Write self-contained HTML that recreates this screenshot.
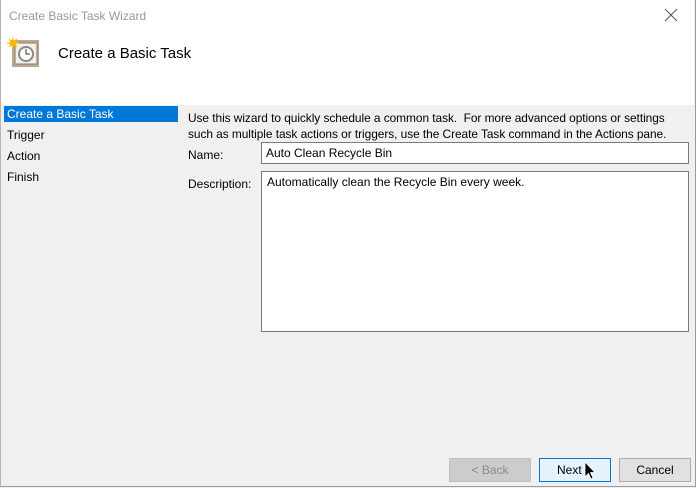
<!DOCTYPE html><html><head><style>
body{margin:0;width:696px;height:488px;overflow:hidden;font-family:"Liberation Sans",sans-serif;font-size:12px;color:#000;position:relative;background:#f0f0f0}
.a{position:absolute;white-space:nowrap}
</style></head><body>
<div class="a" style="left:0;top:0;width:694px;height:105px;background:#fff"></div>
<div class="a" style="left:0;top:0;width:694px;height:486px;border:1px solid #9a9a9a;border-top:none;border-left:1px solid #b5b5b5"></div>
<div class="a" style="left:9px;top:9px;color:#999;font-size:12px">Create Basic Task Wizard</div>
<svg class="a" style="left:664px;top:8px" width="14" height="14"><path d="M1 1L13 13M13 1L1 13" stroke="#555" stroke-width="1"/></svg>
<svg class="a" style="left:6px;top:36px" width="34" height="34">
<rect x="6" y="4" width="27" height="27" fill="#b8a892"/><rect x="9" y="7" width="22" height="21" fill="#f4efe8" stroke="#8b7b69"/>
<circle cx="20" cy="18" r="7" fill="#fff" stroke="#8a8a8a" stroke-width="2"/><path d="M20 13V18H24" stroke="#333" fill="none"/>
<circle cx="7" cy="7" r="3.5" fill="#ffc400"/><path d="M7 1V13M1 7H13M3 3L11 11M11 3L3 11" stroke="#f5b800"/></svg>
<div class="a" style="left:58px;top:45px;font-size:15px">Create a Basic Task</div>
<div class="a" style="left:4px;top:106px;width:174px;height:16px;background:#0078d7"></div>
<div class="a" style="left:7px;top:107px;color:#fff">Create a Basic Task</div>
<div class="a" style="left:7px;top:128px">Trigger</div>
<div class="a" style="left:7px;top:149px">Action</div>
<div class="a" style="left:7px;top:170px">Finish</div>
<div class="a" style="left:188px;top:110px;line-height:16px;font-size:11.9px;letter-spacing:-0.05px">Use this wizard to quickly schedule a common task.&nbsp; For more advanced options or settings<br>such as multiple task actions or triggers, use the Create Task command in the Actions pane.</div>
<div class="a" style="left:188px;top:148px">Name:</div>
<div class="a" style="left:188px;top:177px">Description:</div>
<div class="a" style="left:261px;top:142px;width:426px;height:20px;background:#fff;border:1px solid #7a7a7a"></div>
<div class="a" style="left:266px;top:146px">Auto Clean Recycle Bin</div>
<div class="a" style="left:261px;top:171px;width:426px;height:159px;background:#fff;border:1px solid #7a7a7a"></div>
<div class="a" style="left:267px;top:175px">Automatically clean the Recycle Bin every week.</div>
<div class="a" style="left:449px;top:458px;width:80px;height:22px;background:#ccc;border:1px solid #bfbfbf;color:#8a8a8a;text-align:center;line-height:22px">&lt; Back</div>
<div class="a" style="left:539px;top:458px;width:70px;height:22px;background:#e5f1fb;border:1px solid #0078d7;line-height:22px"><span style="position:absolute;left:17px">Next</span></div>
<svg class="a" style="left:584px;top:461px" width="14" height="20"><path d="M1 1V16L4.5 12.5L7 18L9 17L6.5 11.5H11Z" fill="#000" stroke="#fff" stroke-width=".8"/></svg>
<div class="a" style="left:619px;top:458px;width:70px;height:22px;background:#e1e1e1;border:1px solid #adadad;text-align:center;line-height:22px">Cancel</div>
</body></html>
